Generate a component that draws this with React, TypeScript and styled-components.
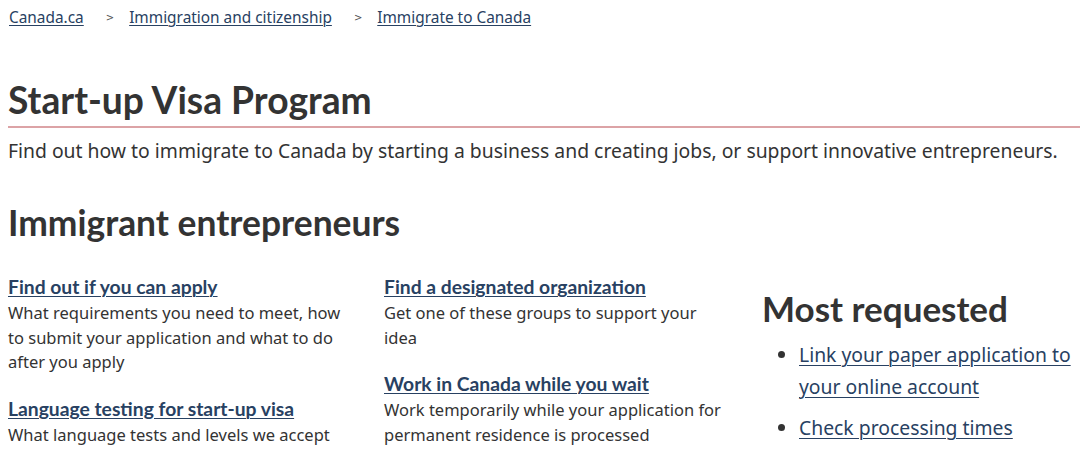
import React from "react";
import styled, { createGlobalStyle } from "styled-components";

const Global = createGlobalStyle`
  html, body { margin: 0; padding: 0; background: #fff; }
  body { font-family: "Noto Sans", sans-serif; color: #333; overflow: hidden; }
  * { box-sizing: border-box; }
`;

const Page = styled.main`
  width: 1080px;
  height: 453px;
  overflow: hidden;
  padding: 0 0 0 8px;
`;

const Breadcrumb = styled.ol`
  list-style: none;
  margin: 0;
  padding: 7px 0 0 1px;
  display: flex;
  align-items: center;
  font-size: 15.4px;
  line-height: 22px;
`;

const Crumb = styled.li`
  display: flex;
  align-items: center;
`;

const Sep = styled.span`
  font-size: 10px;
  color: #555;
  margin: 0 15px 0 22px;
  font-family: "DejaVu Sans", sans-serif;
`;

const CrumbLink = styled.a`
  color: #284162;
  text-decoration: underline;
  text-underline-offset: 2px;
  text-decoration-thickness: 1px;
`;

const Title = styled.h1`
  font-family: Lato, sans-serif;
  font-weight: 700;
  font-size: 37.2px;
  line-height: 44px;
  margin: 49px 0 0 0;
  color: #333;
  padding-bottom: 4px;
  border-bottom: 2px solid #dca3a6;
`;

const Lead = styled.p`
  font-size: 19.35px;
  line-height: 32px;
  margin: 7px 0 0 0;
  white-space: nowrap;
`;

const SectionTitle = styled.h2`
  font-family: Lato, sans-serif;
  font-weight: 700;
  font-size: 35.4px;
  line-height: 44px;
  margin: 34px 0 0 0;
`;

const Columns = styled.div`
  display: grid;
  grid-template-columns: 376px 378px 1fr;
  margin-top: 28px;
`;

const Column = styled.div`
  display: flex;
  flex-direction: column;
  gap: 20px;
  padding-right: 30px;
`;

const Item = styled.div`
  display: flex;
  flex-direction: column;
`;

const ItemLink = styled.a`
  font-family: Lato, sans-serif;
  font-weight: 700;
  font-size: 19.3px;
  line-height: 28px;
  color: #284162;
  text-decoration: underline;
  text-underline-offset: 2px;
  text-decoration-thickness: 1px;
`;

const ItemText = styled.p`
  font-size: 16.5px;
  line-height: 24.5px;
  margin: 0;
`;

const Aside = styled.aside`
  display: flex;
  flex-direction: column;
  padding-top: 15px;
`;

const AsideTitle = styled.h2`
  font-family: Lato, sans-serif;
  font-weight: 700;
  font-size: 35px;
  line-height: 40px;
  margin: 0;
`;

const List = styled.ul`
  margin: 11px 0 0 0;
  padding: 0 0 0 37px;
  font-size: 19.35px;
  line-height: 31.5px;
`;

const ListItem = styled.li`
  margin-bottom: 10px;
  &::marker { color: #333; }
`;

const ListLink = styled.a`
  color: #284162;
  text-decoration: underline;
  text-underline-offset: 3px;
  text-decoration-thickness: 1px;
`;

export default function App() {
  return (
    <>
      <Global />
      <Page>
        <nav>
          <Breadcrumb>
            <Crumb><CrumbLink href="#">Canada.ca</CrumbLink></Crumb>
            <Crumb><Sep>&gt;</Sep><CrumbLink href="#">Immigration and citizenship</CrumbLink></Crumb>
            <Crumb><Sep>&gt;</Sep><CrumbLink href="#">Immigrate to Canada</CrumbLink></Crumb>
          </Breadcrumb>
        </nav>
        <Title>Start-up Visa Program</Title>
        <Lead>Find out how to immigrate to Canada by starting a business and creating jobs, or support innovative entrepreneurs.</Lead>
        <SectionTitle>Immigrant entrepreneurs</SectionTitle>
        <Columns>
          <Column>
            <Item>
              <ItemLink href="#">Find out if you can apply</ItemLink>
              <ItemText>What requirements you need to meet, how to submit your application and what to do after you apply</ItemText>
            </Item>
            <Item>
              <ItemLink href="#">Language testing for start-up visa</ItemLink>
              <ItemText>What language tests and levels we accept</ItemText>
            </Item>
          </Column>
          <Column>
            <Item>
              <ItemLink href="#">Find a designated organization</ItemLink>
              <ItemText>Get one of these groups to support your idea</ItemText>
            </Item>
            <Item>
              <ItemLink href="#">Work in Canada while you wait</ItemLink>
              <ItemText>Work temporarily while your application for permanent residence is processed</ItemText>
            </Item>
          </Column>
          <Aside>
            <AsideTitle>Most requested</AsideTitle>
            <List>
              <ListItem><ListLink href="#">Link your paper application to your online account</ListLink></ListItem>
              <ListItem><ListLink href="#">Check processing times</ListLink></ListItem>
            </List>
          </Aside>
        </Columns>
      </Page>
    </>
  );
}
